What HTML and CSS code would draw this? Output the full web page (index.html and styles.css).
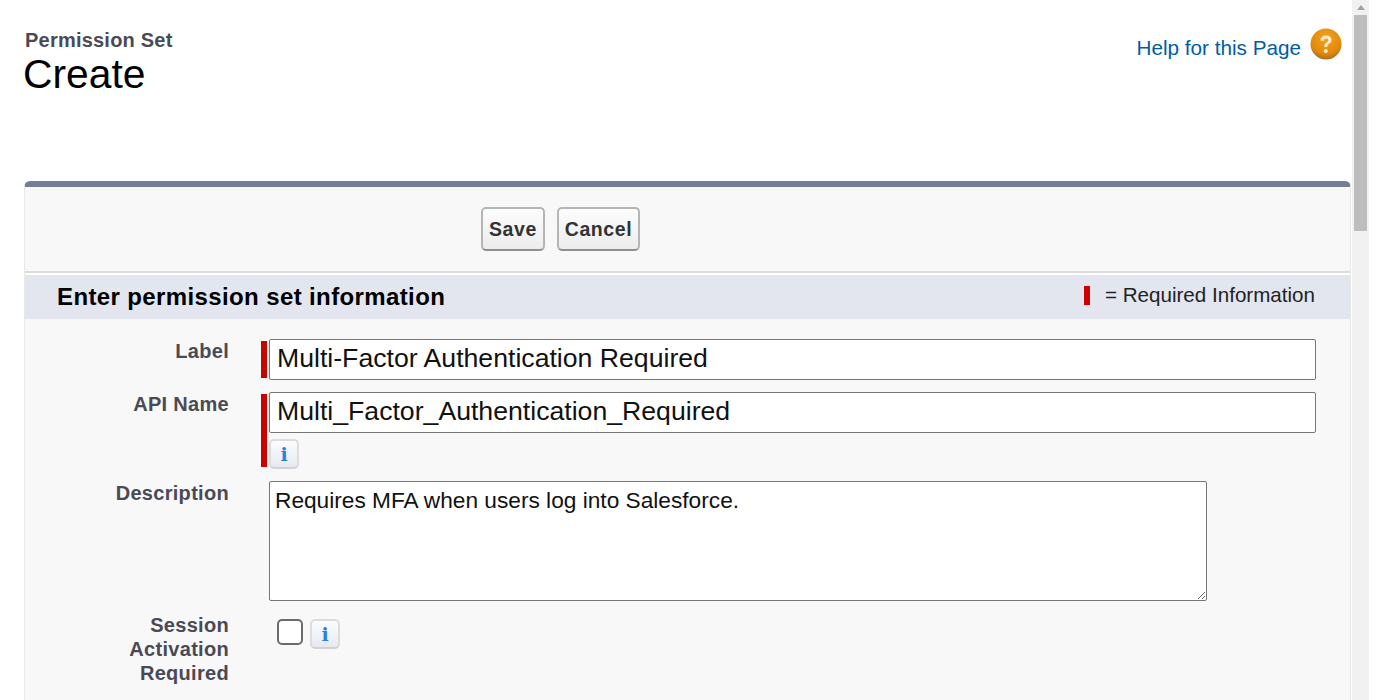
FILE: index.html
```html
<!DOCTYPE html>
<html lang="en">
<head>
<meta charset="utf-8">
<title>Permission Set Create</title>
<link rel="stylesheet" href="styles.css">
</head>
<body>
<div class="window">
  <div class="page">
    <header class="page-head">
      <div class="titles">
        <div class="eyebrow">Permission Set</div>
        <h1 class="title">Create</h1>
      </div>
      <div class="help">
        <a class="help-link" href="#">Help for this Page</a>
        <svg class="help-icon" width="32" height="32" viewBox="0 0 32 32">
          <defs>
            <radialGradient id="orb" cx="50%" cy="32%" r="68%">
              <stop offset="0" stop-color="#f3a21f"/>
              <stop offset="0.72" stop-color="#e38a0b"/>
              <stop offset="1" stop-color="#a9701f"/>
            </radialGradient>
          </defs>
          <circle cx="16" cy="16" r="15.500" fill="url(#orb)"/>
          <path d="M10.500 12.500c0-3 2.500-5 5.700-5 3.200 0 5.300 1.900 5.300 4.500 0 2-1.200 3.100-2.700 4.100-1.100.8-1.500 1.300-1.500 2.900h-3c0-2.400.7-3.400 2.200-4.500 1.100-.8 1.800-1.400 1.800-2.300 0-1-.8-1.700-2.100-1.700-1.300 0-2.200.8-2.300 2.200z" fill="#fdeccb"/>
          <circle cx="15.800" cy="23" r="2" fill="#fdeccb"/>
        </svg>
      </div>
    </header>

    <form class="panel">
      <div class="buttons">
        <button class="btn btn-save" type="button">Save</button>
        <button class="btn btn-cancel" type="button">Cancel</button>
      </div>
      <div class="section-head">
        <h2 class="section-title">Enter permission set information</h2>
        <div class="legend"><span class="legend-bar"></span>= Required Information</div>
      </div>
      <div class="form">
        <div class="row row-label">
          <label class="field-label">Label</label>
          <div class="req-bar"></div>
          <div class="field">
            <input class="text-input" type="text" value="Multi-Factor Authentication Required">
          </div>
        </div>
        <div class="row row-api">
          <label class="field-label">API Name</label>
          <div class="req-bar"></div>
          <div class="field">
            <input class="text-input" type="text" value="Multi_Factor_Authentication_Required">
            <span class="info"><span class="info-i">i</span></span>
          </div>
        </div>
        <div class="row row-desc">
          <label class="field-label">Description</label>
          <div class="no-bar"></div>
          <div class="field">
            <textarea class="text-area">Requires MFA when users log into Salesforce.</textarea>
          </div>
        </div>
        <div class="row row-session">
          <label class="field-label">Session Activation Required</label>
          <div class="no-bar"></div>
          <div class="field field-inline">
            <span class="checkbox"></span>
            <span class="info"><span class="info-i">i</span></span>
          </div>
        </div>
      </div>
    </form>
  </div>
  <div class="scrollbar">
    <div class="arrow"></div>
    <div class="thumb"></div>
  </div>
</div>
</body>
</html>
```

FILE: styles.css
```css
* { box-sizing: border-box; }
html, body { margin: 0; padding: 0; height: 700px; overflow: hidden; background: #fff; }
body { font-family: "Liberation Sans", Arial, sans-serif; color: #000; }

.window { display: flex; width: 1392px; height: 700px; overflow: hidden; }
.page { width: 1352px; flex: none; padding-left: 24px; }

.scrollbar { width: 17px; flex: none; height: 700px; background: #f1f1f1; padding-left: 2px; }
.arrow { width: 0; height: 0; margin: 5px 0 0 3px; border-left: 4px solid transparent; border-right: 4px solid transparent; border-bottom: 5px solid #a3a3a3; }
.thumb { width: 13px; height: 216px; margin-top: 5px; background: #bdbdbd; }

.page-head { display: flex; justify-content: space-between; height: 181px; padding-top: 27px; }
.eyebrow { font-size: 20px; line-height: 26px; font-weight: 700; letter-spacing: 0.22px; color: #4a4a56; padding-left: 1px; }
.title { margin: 0 0 0 -1px; font-size: 40.800px; line-height: 42px; font-weight: 400; color: #000; }
.help { display: flex; align-items: flex-start; gap: 9px; padding-right: 10px; }
.help-link { font-size: 20.700px; line-height: 42px; color: #015ba7; text-decoration: none; }
.help-icon { margin-top: 1px; }

.panel { width: 1327px; height: 519px; background: #f8f8f8; border-top: 6px solid #747e96; border-left: 1px solid #e8e8e8; border-right: 1px solid #e8e8e8; border-radius: 6px 6px 0 0; }

.buttons { display: flex; gap: 12px; height: 84px; padding: 20px 0 0 456px; }
.btn { height: 44px; padding: 0; font: 700 19.500px "Liberation Sans", Arial, sans-serif; letter-spacing: 0.6px; color: #333; background: linear-gradient(#fdfdfd, #ececec); border: 2px solid #b5b5b5; border-bottom-color: #8f8f8f; border-radius: 5px; }
.btn-save { width: 64px; }
.btn-cancel { width: 83px; }

.section-head { display: flex; justify-content: space-between; align-items: center; height: 48px; padding: 2px 35px 0 32px; background: #e3e6ee; border-top: 2px solid #dddddd; box-shadow: inset 0 2px 0 #fff; }
.section-title { margin: 0; font-size: 24px; font-weight: 700; letter-spacing: 0.38px; color: #000; }
.legend { display: flex; align-items: center; font-size: 20.600px; color: #222; margin-top: -4px; }
.legend-bar { width: 6px; height: 19px; margin-right: 15px; background: #c00; }

.form { padding-top: 20px; }
.row { display: grid; grid-template-columns: 204px 32px 6px 2px 1fr; }
.row-label { height: 53px; }
.row-api { height: 89px; }
.row-desc { height: 132px; }
.field-label { grid-column: 1; padding-left: 60px; font-size: 20px; line-height: 24px; font-weight: 700; letter-spacing: 0.3px; color: #4a4a56; text-align: right; }
.req-bar, .no-bar { grid-column: 3; }
.field { grid-column: 5; display: flex; flex-direction: column; align-items: flex-start; }
.req-bar { background: #c00; width: 6px; margin-top: 2px; height: 37px; }
.row-api .req-bar { height: 73px; }

.text-input { width: 1047px; height: 41px; padding: 0 7px 2px; font: 26.650px "Liberation Sans", Arial, sans-serif; color: #111; background: #fff; border: 1px solid #767676; border-radius: 2px; outline: none; }
.text-area { width: 938px; height: 120px; padding: 5px; font: 22.700px "Liberation Sans", Arial, sans-serif; color: #111; background: #fff; border: 1px solid #767676; border-radius: 2px; outline: none; }

.info { display: flex; align-items: center; justify-content: center; width: 30px; height: 30px; margin-top: 6px; background: linear-gradient(#fbfcfe, #e6eaf0); border: 2px solid #dcdcdc; border-bottom-color: #d2d2d2; border-radius: 5px; }
.info-i { font: 700 19px "DejaVu Serif", serif; line-height: 1; color: #2a7fe0; }

.field-inline { flex-direction: row; align-items: flex-start; gap: 7px; padding: 6px 0 0 8px; }
.field-inline .info { margin-top: 0; }
.checkbox { width: 26px; height: 26px; background: #fff; border: 2px solid #6b6b6b; border-radius: 5px; }
```
